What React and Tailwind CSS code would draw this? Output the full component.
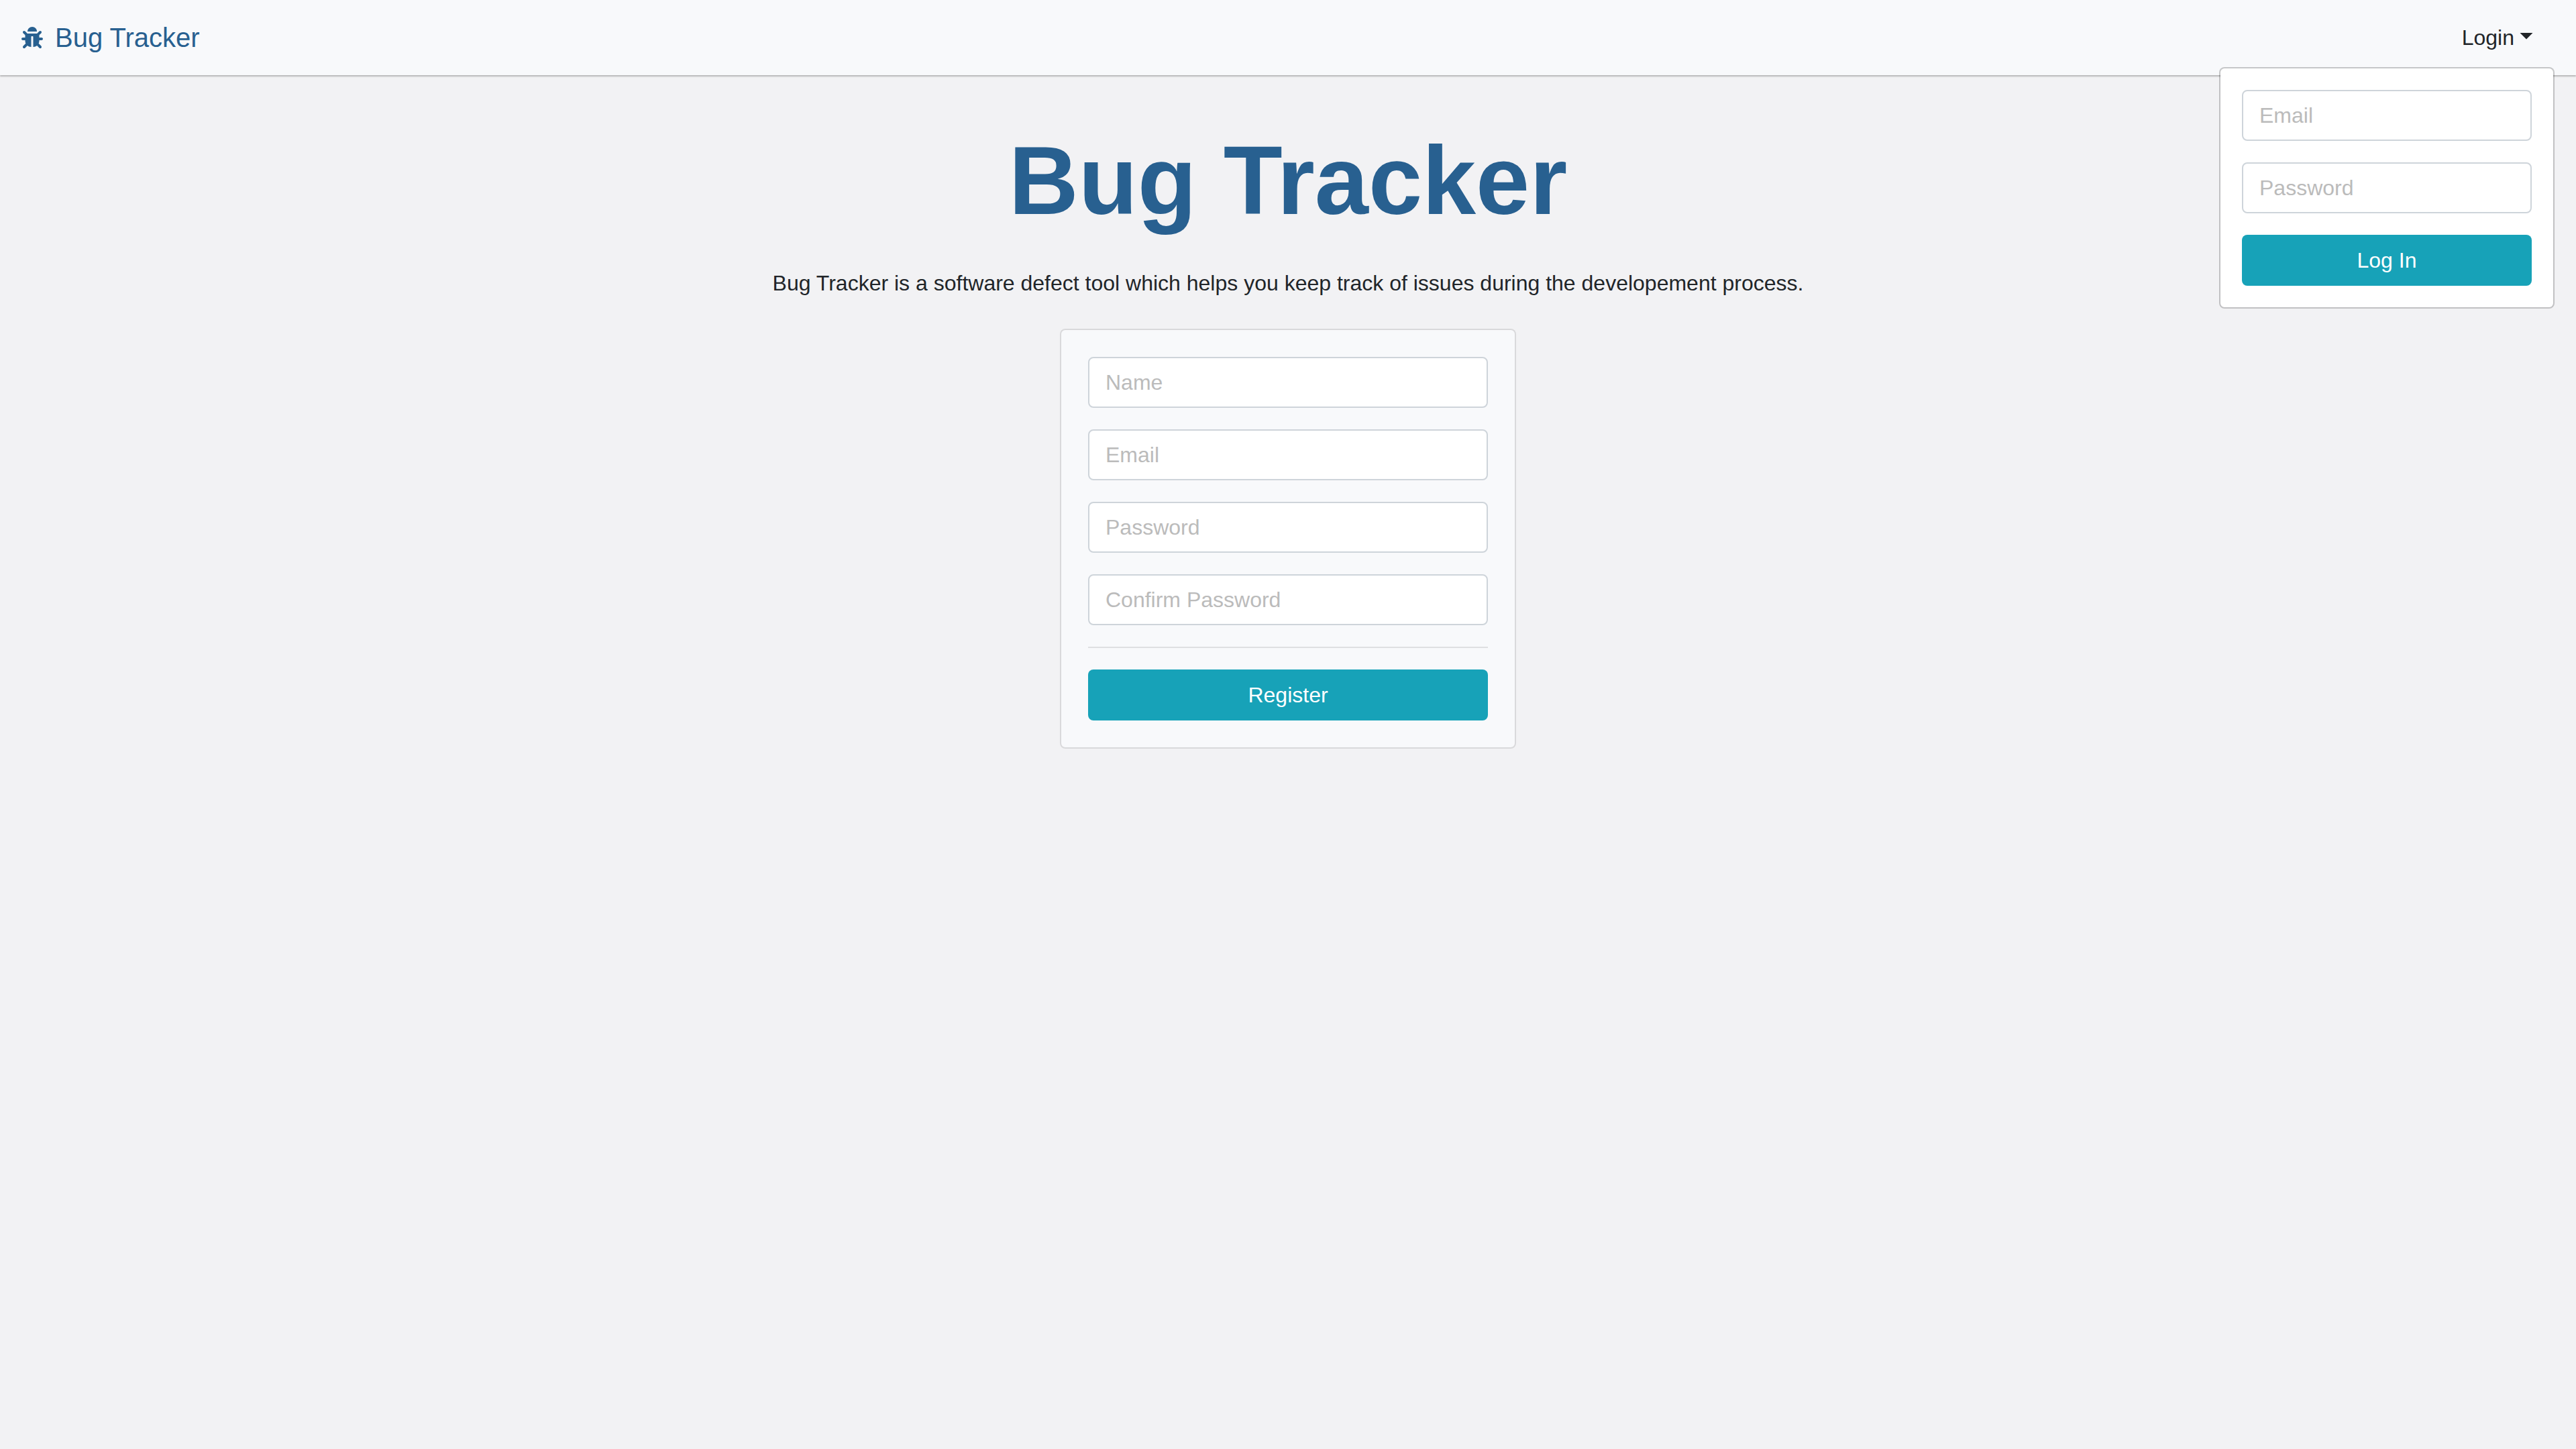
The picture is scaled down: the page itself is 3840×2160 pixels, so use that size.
import { FaBug } from "react-icons/fa";

function Field({ label, type = "text" }) {
  return (
    <input
      type={type}
      aria-label={label}
      placeholder={label}
      className="block h-[76px] w-full rounded-lg border-2 border-[#ced4da] bg-white px-6 text-[32px] leading-[48px] text-[#495057] placeholder:text-[#bbbbbb] placeholder:opacity-100"
    />
  );
}

function SubmitButton({ children }) {
  return (
    <button
      type="submit"
      className="block h-[76px] w-full rounded-lg bg-[#17a2b8] px-6 text-center text-[32px] leading-[48px] text-white"
    >
      {children}
    </button>
  );
}

function LoginMenu() {
  return (
    <div className="relative">
      <button
        type="button"
        aria-expanded="true"
        className="flex items-center gap-2 px-8 py-4 text-[32px] leading-[48px] text-[#212529]"
      >
        Login
        <svg aria-hidden="true" viewBox="0 0 20 20" className="h-5 w-5">
          <path d="M0.5 3h19L10 12.6z" fill="currentColor" />
        </svg>
      </button>
      <form className="absolute right-0 top-full mt-1 flex w-[500px] flex-col gap-8 rounded-lg border-2 border-black/20 bg-white bg-clip-padding p-8">
        <Field label="Email" type="email" />
        <Field label="Password" type="password" />
        <SubmitButton>Log In</SubmitButton>
      </form>
    </div>
  );
}

export default function App() {
  return (
    <div className="min-h-screen bg-[#f2f2f4] font-['Liberation_Sans',Arial,sans-serif] text-[32px] leading-[48px] text-[#212529]">
      <header className="relative z-10 flex items-center justify-between bg-[#f8f9fb] px-8 py-4 shadow-[0_2px_2px_rgba(0,0,0,0.25)]">
        <a href="#" className="flex items-center gap-[18px] text-[40px] leading-[60px] text-[#286090]">
          <FaBug aria-hidden="true" className="h-8 w-8" />
          Bug Tracker
        </a>
        <LoginMenu />
      </header>
      <main className="flex flex-col items-center px-8 pt-[72px]">
        <h1 className="text-center text-[144px] font-bold leading-[172px] text-[#286090]">Bug Tracker</h1>
        <p className="mt-[42px] text-center">
          Bug Tracker is a software defect tool which helps you keep track of issues during the developement process.
        </p>
        <form className="mt-11 flex w-full max-w-[680px] flex-col gap-8 rounded-lg border-2 border-black/10 bg-[#f8f9fb] bg-clip-padding p-10">
          <Field label="Name" />
          <Field label="Email" type="email" />
          <Field label="Password" type="password" />
          <Field label="Confirm Password" type="password" />
          <hr className="border-t-2 border-black/10" />
          <SubmitButton>Register</SubmitButton>
        </form>
      </main>
    </div>
  );
}
